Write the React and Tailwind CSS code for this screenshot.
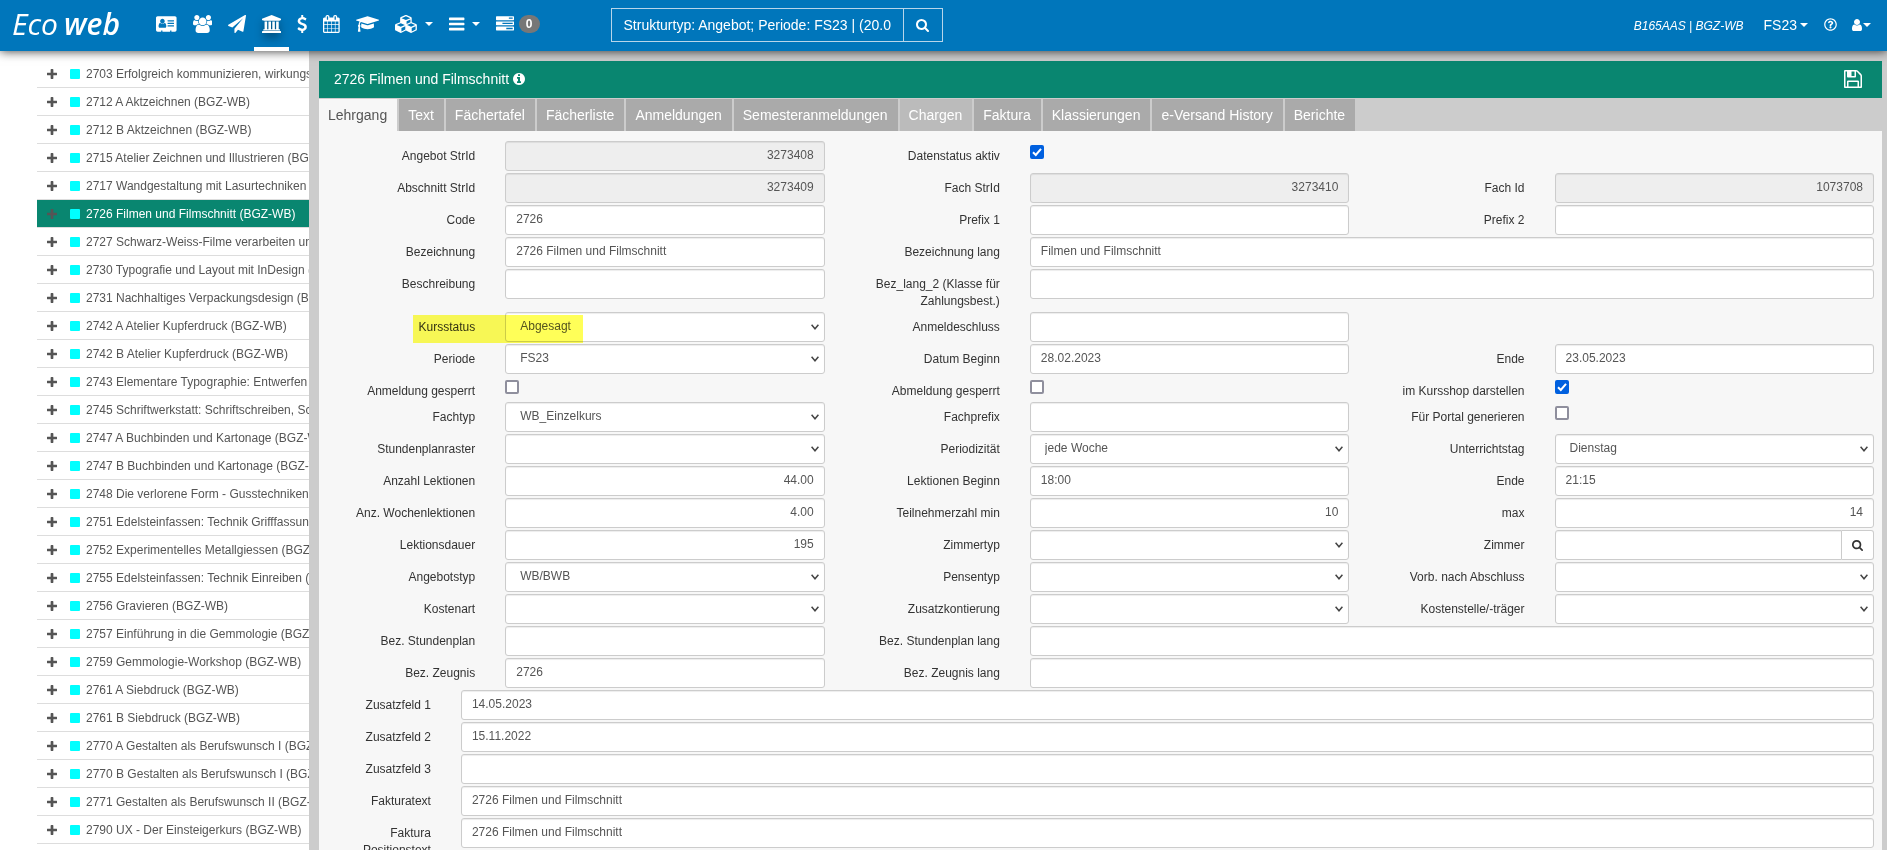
import { Fragment, useId } from "react";
import { FaRegQuestionCircle } from "react-icons/fa";

const ICONS = {
  card: {
    box: "0 0 2048 1792",
    path: "M1024 1131q0-64-9-117.5t-29.5-103-60.5-78-97-28.5q-6 4-30 18t-37.5 21.5-35.5 17.5-43 14.5-42 4.5-42-4.5-43-14.5-35.5-17.5-37.5-21.5-30-18q-57 0-97 28.5t-60.5 78-29.5 103-9 117.5 37 106.5 91 42.5h512q54 0 91-42.5t37-106.5zm-157-520q0-94-66.5-160.5t-160.5-66.5-160.5 66.5-66.5 160.5 66.5 160.5 160.5 66.5 160.5-66.5 66.5-160.5zm925 509v-64q0-14-9-23t-23-9h-576q-14 0-23 9t-9 23v64q0 14 9 23t23 9h576q14 0 23-9t9-23zm0-260v-56q0-15-10.5-25.5t-25.5-10.5h-568q-15 0-25.5 10.5t-10.5 25.5v56q0 15 10.5 25.5t25.5 10.5h568q15 0 25.5-10.5t10.5-25.5zm0-252v-64q0-14-9-23t-23-9h-576q-14 0-23 9t-9 23v64q0 14 9 23t23 9h576q14 0 23-9t9-23zm256-320v1216q0 66-47 113t-113 47h-352v-96q0-14-9-23t-23-9h-64q-14 0-23 9t-9 23v96h-768v-96q0-14-9-23t-23-9h-64q-14 0-23 9t-9 23v96h-352q-66 0-113-47t-47-113v-1216q0-66 47-113t113-47h1728q66 0 113 47t47 113z",
  },
  users: {
    box: "0 0 1920 1792",
    path: "M593 896q-162 5-265 128h-134q-82 0-138-40.5t-56-118.5q0-353 124-353 6 0 43.5 21t97.5 42.5 119 21.5q67 0 133-23-5 37-5 66 0 139 81 256zm1071 637q0 120-73 189.5t-194 69.5h-874q-121 0-194-69.5t-73-189.5q0-53 3.5-103.5t14-109 26.5-108.5 43-97.5 62-81 85.5-53.5 111.5-20q10 0 43 21.5t73 48 107 48 135 21.5 135-21.5 107-48 73-48 43-21.5q61 0 111.5 20t85.5 53.5 62 81 43 97.5 26.5 108.5 14 109 3.5 103.5zm-1024-1277q0 106-75 181t-181 75-181-75-75-181 75-181 181-75 181 75 75 181zm704 384q0 159-112.5 271.5t-271.5 112.5-271.5-112.5-112.5-271.5 112.5-271.5 271.5-112.5 271.5 112.5 112.5 271.5zm576 225q0 78-56 118.5t-138 40.5h-134q-103-123-265-128 81-117 81-256 0-29-5-66 66 23 133 23 59 0 119-21.5t97.5-42.5 43.5-21q124 0 124 353zm-128-609q0 106-75 181t-181 75-181-75-75-181 75-181 181-75 181 75 75 181z",
  },
  plane: {
    box: "0 0 1792 1792",
    path: "M1764 11q33 24 27 64l-256 1536q-5 29-32 45-14 8-31 8-11 0-24-5l-453-185-242 295q-18 23-49 23-13 0-22-4-19-7-30.5-23.5t-11.5-36.5v-349l864-1059-1069 925-395-162q-37-14-40-55-2-40 32-59l1664-960q15-9 32-9 20 0 36 11z",
  },
  university: {
    box: "0 0 1920 1792",
    path: "M960 0l960 384v128h-128q0 26-20.5 45t-48.5 19h-1526q-28 0-48.5-19t-20.5-45h-128v-128zm-704 640h256v768h128v-768h256v768h128v-768h256v768h128v-768h256v768h59q28 0 48.5 19t20.5 45v64h-1664v-64q0-26 20.5-45t48.5-19h59v-768zm1595 960q28 0 48.5 19t20.5 45v128h-1920v-128q0-26 20.5-45t48.5-19h1782z",
  },
  dollar: {
    box: "384 0 1024 1792",
    path: "M1362 1185q0 153-99.5 263.5t-258.5 136.5v175q0 14-9 23t-23 9h-135q-13 0-22.5-9.5t-9.5-22.5v-175q-66-9-127.5-31t-101.5-44.5-74-48-46.5-37.5-17.5-18q-17-21-2-41l103-135q7-10 23-12 15-2 24 9l2 2q113 99 243 125 37 8 74 8 81 0 142.5-43t61.5-122q0-28-15-53t-33.5-42-58.5-37.5-66-32-80-32.5q-39-16-61.5-25t-61.5-26.5-62.5-31-56.5-35.5-53.5-42.5-43.5-49-35.5-58-21-66.5-8.5-78q0-138 98-242t255-134v-180q0-13 9.5-22.5t22.5-9.5h135q14 0 23 9t9 23v176q57 6 110.5 23t87 33.5 63.5 37.5 39 29 15 14q17 18 5 38l-81 146q-8 15-23 16-14 3-27-7-3-3-14.5-12t-39-26.5-58.5-32-74.5-26-85.5-11.5q-95 0-155 43t-60 111q0 26 8.5 48t29.5 41.5 39.5 33 56 31 60.5 27 70 27.5q53 20 81 31.5t76 35 75.5 42.5 62 50 53 63.5 31.5 76.5 13 94z",
  },
  calendar: {
    box: "64 0 1664 1792",
    path: "M192 1664h288v-288h-288v288zm352 0h320v-288h-320v288zm-352-352h288v-320h-288v320zm352 0h320v-320h-320v320zm-352-384h288v-288h-288v288zm736 736h320v-288h-320v288zm-384-736h320v-288h-320v288zm768 736h288v-288h-288v288zm-384-352h320v-320h-320v320zm-352-864v-288q0-13-9.5-22.5t-22.5-9.5h-64q-13 0-22.5 9.5t-9.5 22.5v288q0 13 9.5 22.5t22.5 9.5h64q13 0 22.5-9.5t9.5-22.5zm736 864h288v-320h-288v320zm-384-384h320v-288h-320v288zm384 0h288v-288h-288v288zm32-480v-288q0-13-9.5-22.5t-22.5-9.5h-64q-13 0-22.5 9.5t-9.5 22.5v288q0 13 9.5 22.5t22.5 9.5h64q13 0 22.5-9.5t9.5-22.5zm384-64v1280q0 52-38 90t-90 38h-1408q-52 0-90-38t-38-90v-1280q0-52 38-90t90-38h128v-96q0-66 47-113t113-47h64q66 0 113 47t47 113v96h384v-96q0-66 47-113t113-47h64q66 0 113 47t47 113v96h128q52 0 90 38t38 90z",
  },
  graduation: {
    box: "0 0 2304 1792",
    path: "M1774 836l18 316q4 69-82 128t-235 93.5-323 34.5-323-34.5-235-93.5-82-128l18-316 574 181q22 7 48 7t48-7zm530-324q0 23-22 31l-1120 352q-4 1-10 1t-10-1l-652-206q-43 34-71 111.5t-34 178.5q63 36 63 109 0 69-58 107l58 433q2 14-8 25-9 11-24 11h-192q-15 0-24-11-10-11-8-25l58-433q-58-38-58-107 0-73 65-111 11-207 98-330l-333-104q-22-8-22-31t22-31l1120-352q4-1 10-1t10 1l1120 352q22 8 22 31z",
  },
  cubes: {
    box: "0 0 2304 1792",
    path: "M640 1632l384-192v-314l-384 164v342zm-64-454l404-173-404-173-404 173zm1088 454l384-192v-314l-384 164v342zm-64-454l404-173-404-173-404 173zm-448-293l384-165v-266l-384 164v267zm-64-379l441-189-441-189-441 189zm1088 518v416q0 36-19 67t-52 47l-448 224q-25 14-57 14t-57-14l-448-224q-4-2-7-4-2 2-7 4l-448 224q-25 14-57 14t-57-14l-448-224q-33-16-52-47t-19-67v-416q0-38 21.5-70t56.5-48l434-186v-400q0-38 21.5-70t56.5-48l448-192q23-10 50-10t50 10l448 192q35 16 56.5 48t21.5 70v400l434 186q36 16 57 48t21 70z",
  },
  bars: {
    box: "128 0 1536 1792",
    path: "M1664 1344v128q0 26-19 45t-45 19h-1408q-26 0-45-19t-19-45v-128q0-26 19-45t45-19h1408q26 0 45 19t19 45zm0-512v128q0 26-19 45t-45 19h-1408q-26 0-45-19t-19-45v-128q0-26 19-45t45-19h1408q26 0 45 19t19 45zm0-512v128q0 26-19 45t-45 19h-1408q-26 0-45-19t-19-45v-128q0-26 19-45t45-19h1408q26 0 45 19t19 45z",
  },
  tasks: {
    box: "0 0 1792 1792",
    path: "M1024 1408h640v-128h-640v128zm-384-512h1024v-128h-1024v128zm640-512h384v-128h-384v128zm512 832v256q0 26-19 45t-45 19h-1664q-26 0-45-19t-19-45v-256q0-26 19-45t45-19h1664q26 0 45 19t19 45zm0-512v256q0 26-19 45t-45 19h-1664q-26 0-45-19t-19-45v-256q0-26 19-45t45-19h1664q26 0 45 19t19 45zm0-512v256q0 26-19 45t-45 19h-1664q-26 0-45-19t-19-45v-256q0-26 19-45t45-19h1664q26 0 45 19t19 45z",
  },
  search: {
    box: "64 128 1664 1664",
    path: "M1216 832q0-185-131.5-316.5t-316.5-131.5-316.5 131.5-131.5 316.5 131.5 316.5 316.5 131.5 316.5-131.5 131.5-316.5zm512 832q0 52-38 90t-90 38q-54 0-90-38l-343-342q-179 124-399 124-143 0-273.5-55.5t-225-150-150-225-55.5-273.5 55.5-273.5 150-225 225-150 273.5-55.5 273.5 55.5 225 150 150 225 55.5 273.5q0 220-124 399l343 343q37 37 37 90z",
  },
  plus: {
    box: "192 128 1408 1408",
    path: "M1600 736v192q0 40-28 68t-68 28h-416v416q0 40-28 68t-68 28h-192q-40 0-68-28t-28-68v-416h-416q-40 0-68-28t-28-68v-192q0-40 28-68t68-28h416v-416q0-40 28-68t68-28h192q40 0 68 28t28 68v416h416q40 0 68 28t28 68z",
  },
  info: {
    box: "128 128 1536 1536",
    path: "M1152 1376v-160q0-14-9-23t-23-9h-96v-512q0-14-9-23t-23-9h-320q-14 0-23 9t-9 23v160q0 14 9 23t23 9h96v320h-96q-14 0-23 9t-9 23v160q0 14 9 23t23 9h448q14 0 23-9t9-23zm-128-896v-160q0-14-9-23t-23-9h-192q-14 0-23 9t-9 23v160q0 14 9 23t23 9h192q14 0 23-9t9-23zm640 416q0 209-103 385.5t-279.5 279.5-385.5 103-385.5-103-279.5-279.5-103-385.5 103-385.5 279.5-279.5 385.5-103 385.5 103 279.5 279.5 103 385.5z",
  },
  user: {
    box: "256 128 1280 1536",
    path: "M1536 1399q0 109-62.5 187t-150.5 78h-854q-88 0-150.5-78t-62.5-187q0-85 8.5-160.5t31.5-152 58.5-131 94-89 134.5-34.5q131 128 313 128t313-128q76 0 134.5 34.5t94 89 58.5 131 31.5 152 8.5 160.5zm-256-887q0 159-112.5 271.5t-271.5 112.5-271.5-112.5-112.5-271.5 112.5-271.5 271.5-112.5 271.5 112.5 112.5 271.5z",
  },
  save: {
    box: "128 128 1536 1536",
    path: "M512 1536h768v-384h-768v384zm896 0h128v-896q0-14-10-38.5t-20-34.5l-281-281q-10-10-34-20t-39-10v416q0 40-28 68t-68 28h-576q-40 0-68-28t-28-68v-416h-128v1280h128v-416q0-40 28-68t68-28h832q40 0 68 28t28 68v416zm-384-928v-320q0-13-9.5-22.5t-22.5-9.5h-192q-13 0-22.5 9.5t-9.5 22.5v320q0 13 9.5 22.5t22.5 9.5h192q13 0 22.5-9.5t9.5-22.5zm640 32v928q0 40-28 68t-68 28h-1344q-40 0-68-28t-28-68v-1344q0-40 28-68t68-28h928q40 0 88 20t76 48l280 280q28 28 48 76t20 88z",
  },
};

const Icon = ({ name, className }) => (
  <svg viewBox={ICONS[name].box} fill="currentColor" className={className} aria-hidden="true">
    <path d={ICONS[name].path} />
  </svg>
);

const Caret = () => (
  <svg viewBox="0 0 8 4" fill="currentColor" className="h-1 w-2" aria-hidden="true">
    <path d="M0 0h8L4 4z" />
  </svg>
);

const navItems = [
  { icon: "card", label: "Adressen" },
  { icon: "users", label: "Gruppen" },
  { icon: "plane", label: "Versand" },
  { icon: "university", label: "Angebot", active: true },
  { icon: "dollar", label: "Finanzen" },
  { icon: "calendar", label: "Kalender" },
  { icon: "graduation", label: "Ausbildung" },
  { icon: "cubes", label: "Module", menu: true },
  { icon: "bars", label: "Listen", menu: true },
  { icon: "tasks", label: "Aufgaben", badge: "0" },
];

const courses = [
  "2703 Erfolgreich kommunizieren, wirkungsvoll",
  "2712 A Aktzeichnen (BGZ-WB)",
  "2712 B Aktzeichnen (BGZ-WB)",
  "2715 Atelier Zeichnen und Illustrieren (BGZ-WB)",
  "2717 Wandgestaltung mit Lasurtechniken (BGZ-WB)",
  "2726 Filmen und Filmschnitt (BGZ-WB)",
  "2727 Schwarz-Weiss-Filme verarbeiten und",
  "2730 Typografie und Layout mit InDesign (BGZ-WB)",
  "2731 Nachhaltiges Verpackungsdesign (BGZ-WB)",
  "2742 A Atelier Kupferdruck (BGZ-WB)",
  "2742 B Atelier Kupferdruck (BGZ-WB)",
  "2743 Elementare Typographie: Entwerfen",
  "2745 Schriftwerkstatt: Schriftschreiben, Schrift",
  "2747 A Buchbinden und Kartonage (BGZ-WB)",
  "2747 B Buchbinden und Kartonage (BGZ-WB)",
  "2748 Die verlorene Form - Gusstechniken",
  "2751 Edelsteinfassen: Technik Grifffassung",
  "2752 Experimentelles Metallgiessen (BGZ-WB)",
  "2755 Edelsteinfassen: Technik Einreiben (BGZ-WB)",
  "2756 Gravieren (BGZ-WB)",
  "2757 Einführung in die Gemmologie (BGZ-WB)",
  "2759 Gemmologie-Workshop (BGZ-WB)",
  "2761 A Siebdruck (BGZ-WB)",
  "2761 B Siebdruck (BGZ-WB)",
  "2770 A Gestalten als Berufswunsch I (BGZ-WB)",
  "2770 B Gestalten als Berufswunsch I (BGZ-WB)",
  "2771 Gestalten als Berufswunsch II (BGZ-WB)",
  "2790 UX - Der Einsteigerkurs (BGZ-WB)",
];

const tabs = [
  "Lehrgang",
  "Text",
  "Fächertafel",
  "Fächerliste",
  "Anmeldungen",
  "Semesteranmeldungen",
  "Chargen",
  "Faktura",
  "Klassierungen",
  "e-Versand History",
  "Berichte",
];

// null leaves one label/control pair of the row empty
const fields = [
  { label: "Angebot StrId", value: "3273408", disabled: true, right: true },
  { label: "Datenstatus aktiv", type: "checkbox", checked: true },
  null,
  { label: "Abschnitt StrId", value: "3273409", disabled: true, right: true },
  { label: "Fach StrId", value: "3273410", disabled: true, right: true },
  { label: "Fach Id", value: "1073708", disabled: true, right: true },
  { label: "Code", value: "2726" },
  { label: "Prefix 1" },
  { label: "Prefix 2" },
  { label: "Bezeichnung", value: "2726 Filmen und Filmschnitt" },
  { label: "Bezeichnung lang", value: "Filmen und Filmschnitt", wide: true },
  { label: "Beschreibung" },
  { label: "Bez_lang_2 (Klasse für Zahlungsbest.)", wide: true },
  { label: "Kursstatus", type: "select", value: "Abgesagt", marked: true },
  { label: "Anmeldeschluss" },
  null,
  { label: "Periode", type: "select", value: "FS23" },
  { label: "Datum Beginn", value: "28.02.2023" },
  { label: "Ende", value: "23.05.2023" },
  { label: "Anmeldung gesperrt", type: "checkbox" },
  { label: "Abmeldung gesperrt", type: "checkbox" },
  { label: "im Kursshop darstellen", type: "checkbox", checked: true },
  { label: "Fachtyp", type: "select", value: "WB_Einzelkurs" },
  { label: "Fachprefix" },
  { label: "Für Portal generieren", type: "checkbox" },
  { label: "Stundenplanraster", type: "select" },
  { label: "Periodizität", type: "select", value: "jede Woche" },
  { label: "Unterrichtstag", type: "select", value: "Dienstag" },
  { label: "Anzahl Lektionen", value: "44.00", right: true },
  { label: "Lektionen Beginn", value: "18:00" },
  { label: "Ende", value: "21:15" },
  { label: "Anz. Wochenlektionen", value: "4.00", right: true },
  { label: "Teilnehmerzahl min", value: "10", right: true },
  { label: "max", value: "14", right: true },
  { label: "Lektionsdauer", value: "195", right: true },
  { label: "Zimmertyp", type: "select" },
  { label: "Zimmer", type: "search" },
  { label: "Angebotstyp", type: "select", value: "WB/BWB" },
  { label: "Pensentyp", type: "select" },
  { label: "Vorb. nach Abschluss", type: "select" },
  { label: "Kostenart", type: "select" },
  { label: "Zusatzkontierung", type: "select" },
  { label: "Kostenstelle/-träger", type: "select" },
  { label: "Bez. Stundenplan" },
  { label: "Bez. Stundenplan lang", wide: true },
  { label: "Bez. Zeugnis", value: "2726" },
  { label: "Bez. Zeugnis lang", wide: true },
];

const extraFields = [
  { label: "Zusatzfeld 1", value: "14.05.2023" },
  { label: "Zusatzfeld 2", value: "15.11.2022" },
  { label: "Zusatzfeld 3" },
  { label: "Fakturatext", value: "2726 Filmen und Filmschnitt" },
  { label: "Faktura Positionstext", value: "2726 Filmen und Filmschnitt" },
];

const box =
  "block h-[30px] w-full min-w-0 rounded-[3px] border border-[#ccc] pb-[2px] text-xs text-[#555] shadow-[inset_0_1px_1px_rgba(0,0,0,0.075)]";

const TextInput = ({ id, value = "", disabled, right }) => (
  <input
    id={id}
    type="text"
    defaultValue={value}
    disabled={disabled}
    className={`${box} px-[10px] ${disabled ? "bg-[#eee]" : "bg-white"} ${right ? "text-right" : ""}`}
  />
);

const SelectInput = ({ id, value = "", marked }) => (
  <div className="relative">
    <select id={id} defaultValue={value} className={`${box} appearance-none bg-white pr-6 pl-[14px]`}>
      <option value={value}>{value}</option>
    </select>
    <svg
      viewBox="0 0 8 6"
      fill="none"
      stroke="#444"
      strokeWidth="1.5"
      className="pointer-events-none absolute top-3 right-[6px] h-[6px] w-2"
      aria-hidden="true"
    >
      <path d="M0.6 0.8 4 4.8 7.4 0.8" />
    </svg>
    {/* Highlighter over label and value */}
    {marked && (
      <div className="pointer-events-none absolute top-[3px] -left-[92px] h-7 w-[170px] bg-[#ffff58] mix-blend-multiply" />
    )}
  </div>
);

const Checkbox = ({ id, checked }) => (
  <div className="relative mt-1 h-[14px] w-[14px]">
    <input
      id={id}
      type="checkbox"
      defaultChecked={checked}
      className="peer block h-[14px] w-[14px] appearance-none rounded-[2px] border-2 border-[#8f8f9d] bg-white checked:border-[#0060df] checked:bg-[#0060df]"
    />
    <svg
      viewBox="0 0 14 14"
      fill="none"
      stroke="#fff"
      strokeWidth="2"
      className="pointer-events-none absolute inset-0 hidden peer-checked:block"
      aria-hidden="true"
    >
      <path d="M3 7.2 5.8 10 11 3.8" />
    </svg>
  </div>
);

const SearchInput = ({ id }) => (
  <div className="flex">
    <input id={id} type="text" className={`${box} rounded-r-none bg-white px-[10px]`} />
    <button
      type="button"
      aria-label="Zimmer suchen"
      className="flex h-[30px] w-8 shrink-0 items-center justify-center rounded-r-[3px] border border-l-0 border-[#ccc] bg-white text-[#333]"
    >
      <Icon name="search" className="h-[11px] w-[11px]" />
    </button>
  </div>
);

const Field = ({ field }) => {
  const id = useId();
  return (
    <>
      <label htmlFor={id} className="self-start pt-[7px] text-right leading-[17px] text-[#333]">
        {field.label}
      </label>
      <div className={field.wide ? "col-span-3" : ""}>
        {field.type === "select" && <SelectInput id={id} {...field} />}
        {field.type === "checkbox" && <Checkbox id={id} checked={field.checked} />}
        {field.type === "search" && <SearchInput id={id} />}
        {!field.type && <TextInput id={id} {...field} />}
      </div>
    </>
  );
};

const Header = () => (
  <header className="relative z-10 flex h-[51px] shrink-0 items-start bg-[#0076bb] text-white shadow-[0_0_10px_rgba(0,0,0,0.8)]">
    <a
      href="#"
      className="flex w-[148px] gap-[6px] pt-[6px] pl-3 font-['Open_Sans',sans-serif] text-[30px] leading-9 font-medium whitespace-nowrap italic"
    >
      <span>Eco</span>
      <span className="font-semibold">web</span>
    </a>
    <nav className="flex">
      {navItems.map((item) => (
        <a
          key={item.icon}
          href="#"
          aria-label={item.label}
          className={`flex h-[51px] items-center border-b-4 px-2 pt-px ${
            item.active ? "border-white" : "border-transparent"
          }`}
        >
          <Icon
            name={item.icon}
            className={`h-[18px] ${item.active ? "drop-shadow-[0_5px_4px_rgba(0,0,0,0.4)]" : ""}`}
          />
          {item.menu && (
            <span className="ml-[7px]">
              <Caret />
            </span>
          )}
          {item.badge && (
            <span className="ml-[5px] h-[18px] rounded-full bg-[#777] px-[7px] text-xs leading-[18px] font-bold">
              {item.badge}
            </span>
          )}
        </a>
      ))}
    </nav>
    <form className="mt-2 ml-[63px] flex h-[34px] w-[332px] border border-[#b8d6ea]">
      <input
        type="text"
        aria-label="Suche"
        defaultValue="Strukturtyp: Angebot; Periode: FS23 | (20.02.2023)"
        className="min-w-0 flex-1 bg-transparent px-3 text-sm text-white"
      />
      <button
        type="button"
        aria-label="Suchen"
        className="flex w-[39px] items-center justify-center border-l border-[#b8d6ea]"
      >
        <Icon name="search" className="h-[13px] w-[13px]" />
      </button>
    </form>
    <div className="ml-auto flex h-[49px] items-center pr-4">
      <span className="mr-5 pt-[2px] italic">B165AAS | BGZ-WB</span>
      <button type="button" className="mr-4 flex items-center gap-[3px] text-sm">
        FS23 <Caret />
      </button>
      <button type="button" aria-label="Hilfe" className="mr-[15px]">
        <FaRegQuestionCircle className="h-[13px] w-[13px]" />
      </button>
      <button type="button" aria-label="Benutzer" className="flex items-center gap-px">
        <Icon name="user" className="h-3" />
        <Caret />
      </button>
    </div>
  </header>
);

const Sidebar = () => (
  <aside className="w-[309px] shrink-0 overflow-hidden bg-white pt-[9px] pl-[37px]">
    <ul>
      {courses.map((course) => {
        const selected = course.startsWith("2726");
        return (
          <li
            key={course}
            className={`flex h-7 items-center border-b border-[#ddd] pl-[10px] whitespace-nowrap ${
              selected ? "bg-[#098670] bg-clip-padding text-white" : "text-[#555]"
            }`}
          >
            <button type="button" aria-label="Aufklappen" className="mr-[13px] text-[#555]">
              <Icon name="plus" className="h-[10px] w-[10px]" />
            </button>
            <span className="mr-[6px] h-[10px] w-[10px] shrink-0 rounded-[1px] bg-[#0ff]" />
            <a href="#" className="min-w-0 flex-1 overflow-hidden">
              {course}
            </a>
          </li>
        );
      })}
    </ul>
  </aside>
);

const tabColor = (tab) => {
  if (tab === "Lehrgang") return "bg-[#f7f7f7] text-[#555]";
  if (tab === "Chargen") return "bg-[#bbb] text-white";
  return "bg-[#aaa] text-white";
};

const App = () => (
  <div className="flex h-screen flex-col overflow-hidden bg-[#ccc] font-['Liberation_Sans',Arial,sans-serif] text-xs">
    <Header />
    <div className="flex min-h-0 flex-1">
      <Sidebar />
      <main className="mt-[10px] mr-[5px] ml-[10px] flex min-w-0 flex-1 flex-col">
        <div className="flex h-[37px] shrink-0 items-center bg-[#098670] px-[15px] pb-px text-white">
          <h1 className="text-sm">2726 Filmen und Filmschnitt</h1>
          <Icon name="info" className="ml-1 h-3 w-3" />
          <button type="button" aria-label="Speichern" className="mr-[5px] ml-auto">
            <Icon name="save" className="h-[18px] w-[18px]" />
          </button>
        </div>
        <div role="tablist" className="mt-px flex h-8 shrink-0 gap-[2px]">
          {tabs.map((tab) => (
            <button
              key={tab}
              type="button"
              role="tab"
              aria-selected={tab === "Lehrgang"}
              className={`pr-[10px] pl-[9px] text-sm whitespace-nowrap ${tabColor(tab)}`}
            >
              {tab}
            </button>
          ))}
        </div>
        <form className="min-h-0 flex-1 overflow-hidden bg-[#f7f7f7] pt-[10px] pr-2 pl-[11px]">
          <div className="grid grid-cols-[5fr_11fr_5fr_11fr_5fr_11fr] gap-x-[30px] gap-y-[2px]">
            {fields.map((field, i) => (
              <Fragment key={i}>{field ? <Field field={field} /> : <div className="col-span-2" />}</Fragment>
            ))}
          </div>
          <div className="mt-[2px] grid grid-cols-[1fr_14fr] gap-x-[30px] gap-y-[2px]">
            {extraFields.map((field) => (
              <Field key={field.label} field={field} />
            ))}
          </div>
        </form>
      </main>
    </div>
  </div>
);

export default App;
